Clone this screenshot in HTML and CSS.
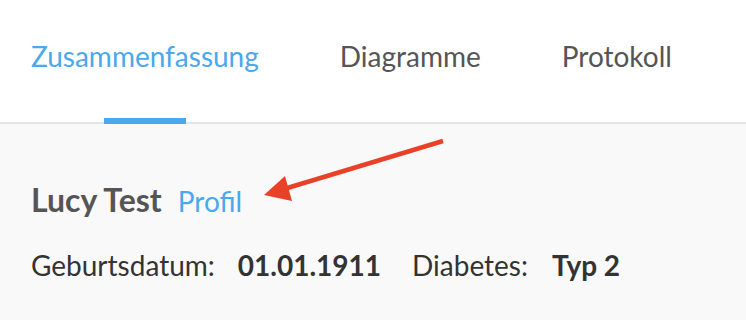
FILE: index.html
```html
<!DOCTYPE html>
<html lang="de">
<head>
<meta charset="utf-8">
<link rel="stylesheet" href="styles.css">
</head>
<body>
<div class="page">
  <nav class="tabs">
    <div class="tab active">Zusammenfassung</div>
    <div class="tab">Diagramme</div>
    <div class="tab">Protokoll</div>
  </nav>
  <main class="content">
    <div class="name-row">
      <span class="name">Lucy Test</span>
      <span class="profile">Profil</span>
    </div>
    <div class="info-row">
      <span class="label">Geburtsdatum:</span>
      <span class="value">01.01.1911</span>
      <span class="label second">Diabetes:</span>
      <span class="value">Typ 2</span>
    </div>
  </main>
  <svg class="arrow" width="746" height="320" viewBox="0 0 746 320">
    <line x1="443" y1="141" x2="284" y2="189" stroke="#e94128" stroke-width="4.5"/>
    <polygon points="264,195 285,176 292,201" fill="#e94128"/>
  </svg>
</div>
</body>
</html>
```
FILE: styles.css
```css
* { box-sizing: border-box; }
html, body { margin: 0; padding: 0; }
body {
  width: 746px;
  height: 320px;
  overflow: hidden;
  background: #f9f9f9;
  font-family: Lato, "Open Sans", sans-serif;
}
.page { position: relative; height: 320px; }
.tabs {
  display: flex;
  height: 124px;
  padding-left: 31px;
  gap: 81px;
  background: #fff;
  border-bottom: 2px solid #e4e4e4;
}
.tab {
  position: relative;
  font-size: 28px;
  color: #555;
  padding-top: 39px;
  line-height: 34px;
  white-space: nowrap;
}
.tab.active { color: #4aa8ec; }
.tab.active::after {
  content: "";
  position: absolute;
  left: 50%;
  bottom: -2px;
  width: 82px;
  height: 6px;
  margin-left: -41px;
  background: #4aa8ec;
}
.content { padding: 58px 31px 0; }
.name-row {
  display: flex;
  align-items: baseline;
  gap: 16px;
  line-height: 36px;
}
.name { font-size: 32px; font-weight: 700; color: #555; }
.profile { font-size: 28px; color: #4aa8ec; }
.info-row {
  display: flex;
  align-items: baseline;
  margin-top: 29px;
  font-size: 28px;
  line-height: 34px;
  color: #333;
  white-space: nowrap;
}
.label { margin-right: 23px; }
.label.second { margin-left: 31px; margin-right: 24px; }
.value { font-weight: 700; color: #333; }
.arrow { position: absolute; left: 0; top: 0; pointer-events: none; }
```
